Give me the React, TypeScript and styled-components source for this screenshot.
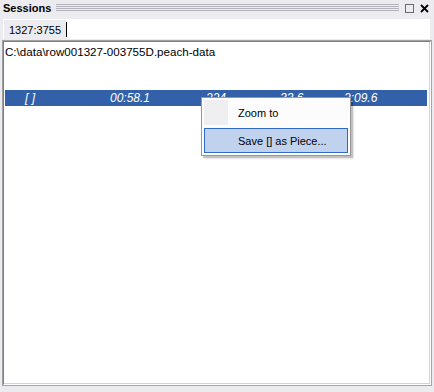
import React from 'react';
import styled, { createGlobalStyle } from 'styled-components';

const GlobalStyle = createGlobalStyle`
  html, body {
    margin: 0;
    padding: 0;
    background: #ecebef;
  }
  body {
    font-family: 'Liberation Sans', Arial, sans-serif;
  }
`;

interface Segment {
  text: string;
  left: number;
}

const rowCells: Segment[] = [
  { text: '[ ]', left: 20 },
  { text: '00:58.1', left: 105 },
  { text: '224', left: 201 },
  { text: '33.6', left: 275 },
  { text: '2:09.6', left: 339 },
];

const App: React.FC = () => {
  return (
    <Window>
      <GlobalStyle />
      <TitleBar>
        <Title>Sessions</Title>
        <Grip />
        <TitleButtons>
          <svg width="9" height="9" viewBox="0 0 9 9">
            <rect x="0.5" y="0.5" width="8" height="8" fill="none" stroke="#6a6a6a" />
          </svg>
          <svg width="9" height="9" viewBox="0 0 9 9">
            <path d="M1 1 L8 8 M8 1 L1 8" stroke="#000" strokeWidth="1.8" />
          </svg>
        </TitleButtons>
      </TitleBar>
      <TabStrip>
        <Tab>1327:3755</Tab>
        <TabDivider />
      </TabStrip>
      <Panel>
        <PanelInner>
          <PathLine>C:\data\row001327-003755D.peach-data</PathLine>
          <SelectedRow>
            {rowCells.map((c) => (
              <RowCell key={c.text} style={{ left: c.left }}>
                {c.text}
              </RowCell>
            ))}
          </SelectedRow>
        </PanelInner>
      </Panel>
      <ContextMenu>
        <MenuItem>
          <Gutter />
          <MenuLabel>Zoom to</MenuLabel>
        </MenuItem>
        <MenuItem $active>
          <Gutter $active />
          <MenuLabel>Save [] as Piece...</MenuLabel>
        </MenuItem>
      </ContextMenu>
    </Window>
  );
};

const Window = styled.div`
  position: relative;
  width: 434px;
  height: 392px;
  background: #ecebef;
  display: flex;
  flex-direction: column;
  overflow: hidden;
`;

const TitleBar = styled.div`
  height: 18px;
  display: flex;
  align-items: center;
  padding: 0 5px 0 3px;
`;

const Title = styled.span`
  font-weight: bold;
  font-size: 11px;
  color: #000;
  margin-top: -2px;
`;

const Grip = styled.div`
  flex: 1;
  height: 8px;
  margin: -2px 6px 0 5px;
  background: repeating-linear-gradient(
    to bottom,
    #b4b3bb 0px,
    #b4b3bb 1px,
    transparent 1px,
    transparent 2px
  );
`;

const TitleButtons = styled.div`
  display: flex;
  align-items: center;
  gap: 6px;
  margin-top: -2px;
  svg {
    display: block;
  }
`;

const TabStrip = styled.div`
  margin: 1px 4px 0 3px;
  height: 20px;
  background: #fff;
  display: flex;
  align-items: stretch;
`;

const Tab = styled.div`
  flex: 0 0 62px;
  margin-top: 1px;
  margin-left: 1px;
  background: #ecebef;
  font-size: 11px;
  color: #000;
  display: flex;
  align-items: center;
  padding-left: 5px;
  box-sizing: border-box;
`;

const TabDivider = styled.div`
  width: 1px;
  background: #000;
  margin: 3px 0 2px;
`;

const Panel = styled.div`
  margin: 1px 2px 6px 2px;
  flex: 1;
  border: 1px solid #a0a0a0;
  border-right-color: #a5a5a5;
  border-bottom-color: #a5a5a5;
  display: flex;
`;

const PanelInner = styled.div`
  flex: 1;
  border-style: solid;
  border-width: 1px;
  border-color: #808080 #fff #fff #808080;
  box-shadow: inset -1px -1px 0 #d4d4d4;
  background: #fff;
  display: flex;
  flex-direction: column;
  padding: 2px 3px 0 1px;
`;

const PathLine = styled.div`
  font-size: 11.6px;
  line-height: 15px;
  color: #000;
  height: 15px;
`;

const SelectedRow = styled.div`
  position: relative;
  margin-top: 31px;
  height: 16px;
  background: #3261a9;
`;

const RowCell = styled.span`
  position: absolute;
  top: 0;
  line-height: 16px;
  font-size: 12px;
  font-style: italic;
  color: #fff;
`;

const ContextMenu = styled.div`
  position: absolute;
  left: 201px;
  top: 97px;
  width: 144px;
  padding: 2px;
  background: #fcfcfc;
  border: 1px solid #979797;
  box-shadow: 2px 2px 1px rgba(0, 0, 0, 0.18), 3px 3px 2px rgba(0, 0, 0, 0.08);
  display: flex;
  flex-direction: column;
  gap: 3px;
`;

const MenuItem = styled.div<{ $active?: boolean }>`
  height: 25px;
  display: flex;
  align-items: center;
  box-sizing: border-box;
  background: ${({ $active }) => ($active ? '#c1d2ee' : 'transparent')};
  border: 1px solid ${({ $active }) => ($active ? '#316ac5' : 'transparent')};
`;

const Gutter = styled.div<{ $active?: boolean }>`
  width: 24px;
  align-self: stretch;
  margin: -1px 0 -1px -1px;
  background: ${({ $active }) => ($active ? 'transparent' : '#efeef1')};
`;

const MenuLabel = styled.span`
  font-size: 11px;
  color: #000;
  padding-left: 10px;
`;

export default App;
